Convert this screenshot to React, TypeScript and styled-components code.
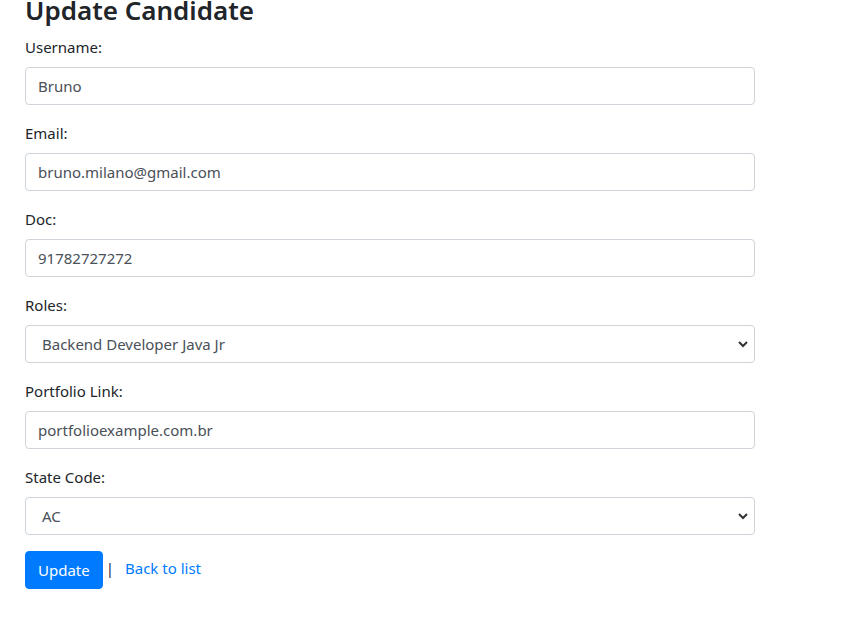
import React from "react";
import styled, { createGlobalStyle } from "styled-components";

const GlobalStyle = createGlobalStyle`
  * { box-sizing: border-box; }
  body {
    margin: 0;
    background: #fff;
    color: #212529;
    font-family: "Segoe UI", "Noto Sans", "Open Sans", sans-serif;
    font-size: 15px;
    line-height: 24px;
  }
`;

const Page = styled.div`
  width: 730px;
  margin-left: 25px;
`;

const Title = styled.h3`
  margin: -7px 0 8px;
  font-size: 26px;
  font-weight: 600;
  line-height: 34px;
  color: #212529;
`;

const FormGroup = styled.div`
  margin-bottom: 16px;
`;

const Label = styled.label`
  display: inline-block;
  margin-bottom: 8px;
`;

const Input = styled.input`
  display: block;
  width: 100%;
  height: 38px;
  padding: 6px 12px;
  font: inherit;
  color: #495057;
  background: #fff;
  border: 1px solid #ced4da;
  border-radius: 4px;
  outline: none;
`;

const SelectWrap = styled.div`
  position: relative;
`;

const Select = styled.select`
  display: block;
  width: 100%;
  height: 38px;
  padding: 6px 30px 6px 16px;
  font: inherit;
  color: #495057;
  background: #fff;
  border: 1px solid #ced4da;
  border-radius: 4px;
  appearance: none;
  outline: none;
`;

const Chevron = styled.svg`
  position: absolute;
  right: 6px;
  top: 14px;
  pointer-events: none;
`;

const Actions = styled.div`
  display: flex;
  align-items: center;
`;

const Button = styled.button`
  height: 38px;
  padding: 6px 12px;
  font: inherit;
  color: #fff;
  background: #007bff;
  border: 1px solid #007bff;
  border-radius: 4px;
`;

const Divider = styled.span`
  margin: 0 11px 4px 3px;
  color: #2b2650;
`;

const BackLink = styled.a`
  color: #007bff;
  text-decoration: none;
  margin-bottom: 4px;
`;

const Dropdown = ({ value, options }: { value: string; options: string[] }) => (
  <SelectWrap>
    <Select defaultValue={value}>
      {options.map((o) => (
        <option key={o}>{o}</option>
      ))}
    </Select>
    <Chevron width="12" height="10" viewBox="0 0 12 10">
      <path d="M2 3 L6 7 L10 3" fill="none" stroke="#333" strokeWidth="2" />
    </Chevron>
  </SelectWrap>
);

export default function App() {
  return (
    <Page>
      <GlobalStyle />
      <Title>Update Candidate</Title>
      <FormGroup>
        <Label>Username:</Label>
        <Input defaultValue="Bruno" />
      </FormGroup>
      <FormGroup>
        <Label>Email:</Label>
        <Input defaultValue="bruno.milano@gmail.com" />
      </FormGroup>
      <FormGroup>
        <Label>Doc:</Label>
        <Input defaultValue="91782727272" />
      </FormGroup>
      <FormGroup>
        <Label>Roles:</Label>
        <Dropdown value="Backend Developer Java Jr" options={["Backend Developer Java Jr"]} />
      </FormGroup>
      <FormGroup>
        <Label>Portfolio Link:</Label>
        <Input defaultValue="portfolioexample.com.br" />
      </FormGroup>
      <FormGroup>
        <Label>State Code:</Label>
        <Dropdown value="AC" options={["AC"]} />
      </FormGroup>
      <Actions>
        <Button>Update</Button>
        <Divider>|</Divider>
        <BackLink href="#">Back to list</BackLink>
      </Actions>
    </Page>
  );
}
